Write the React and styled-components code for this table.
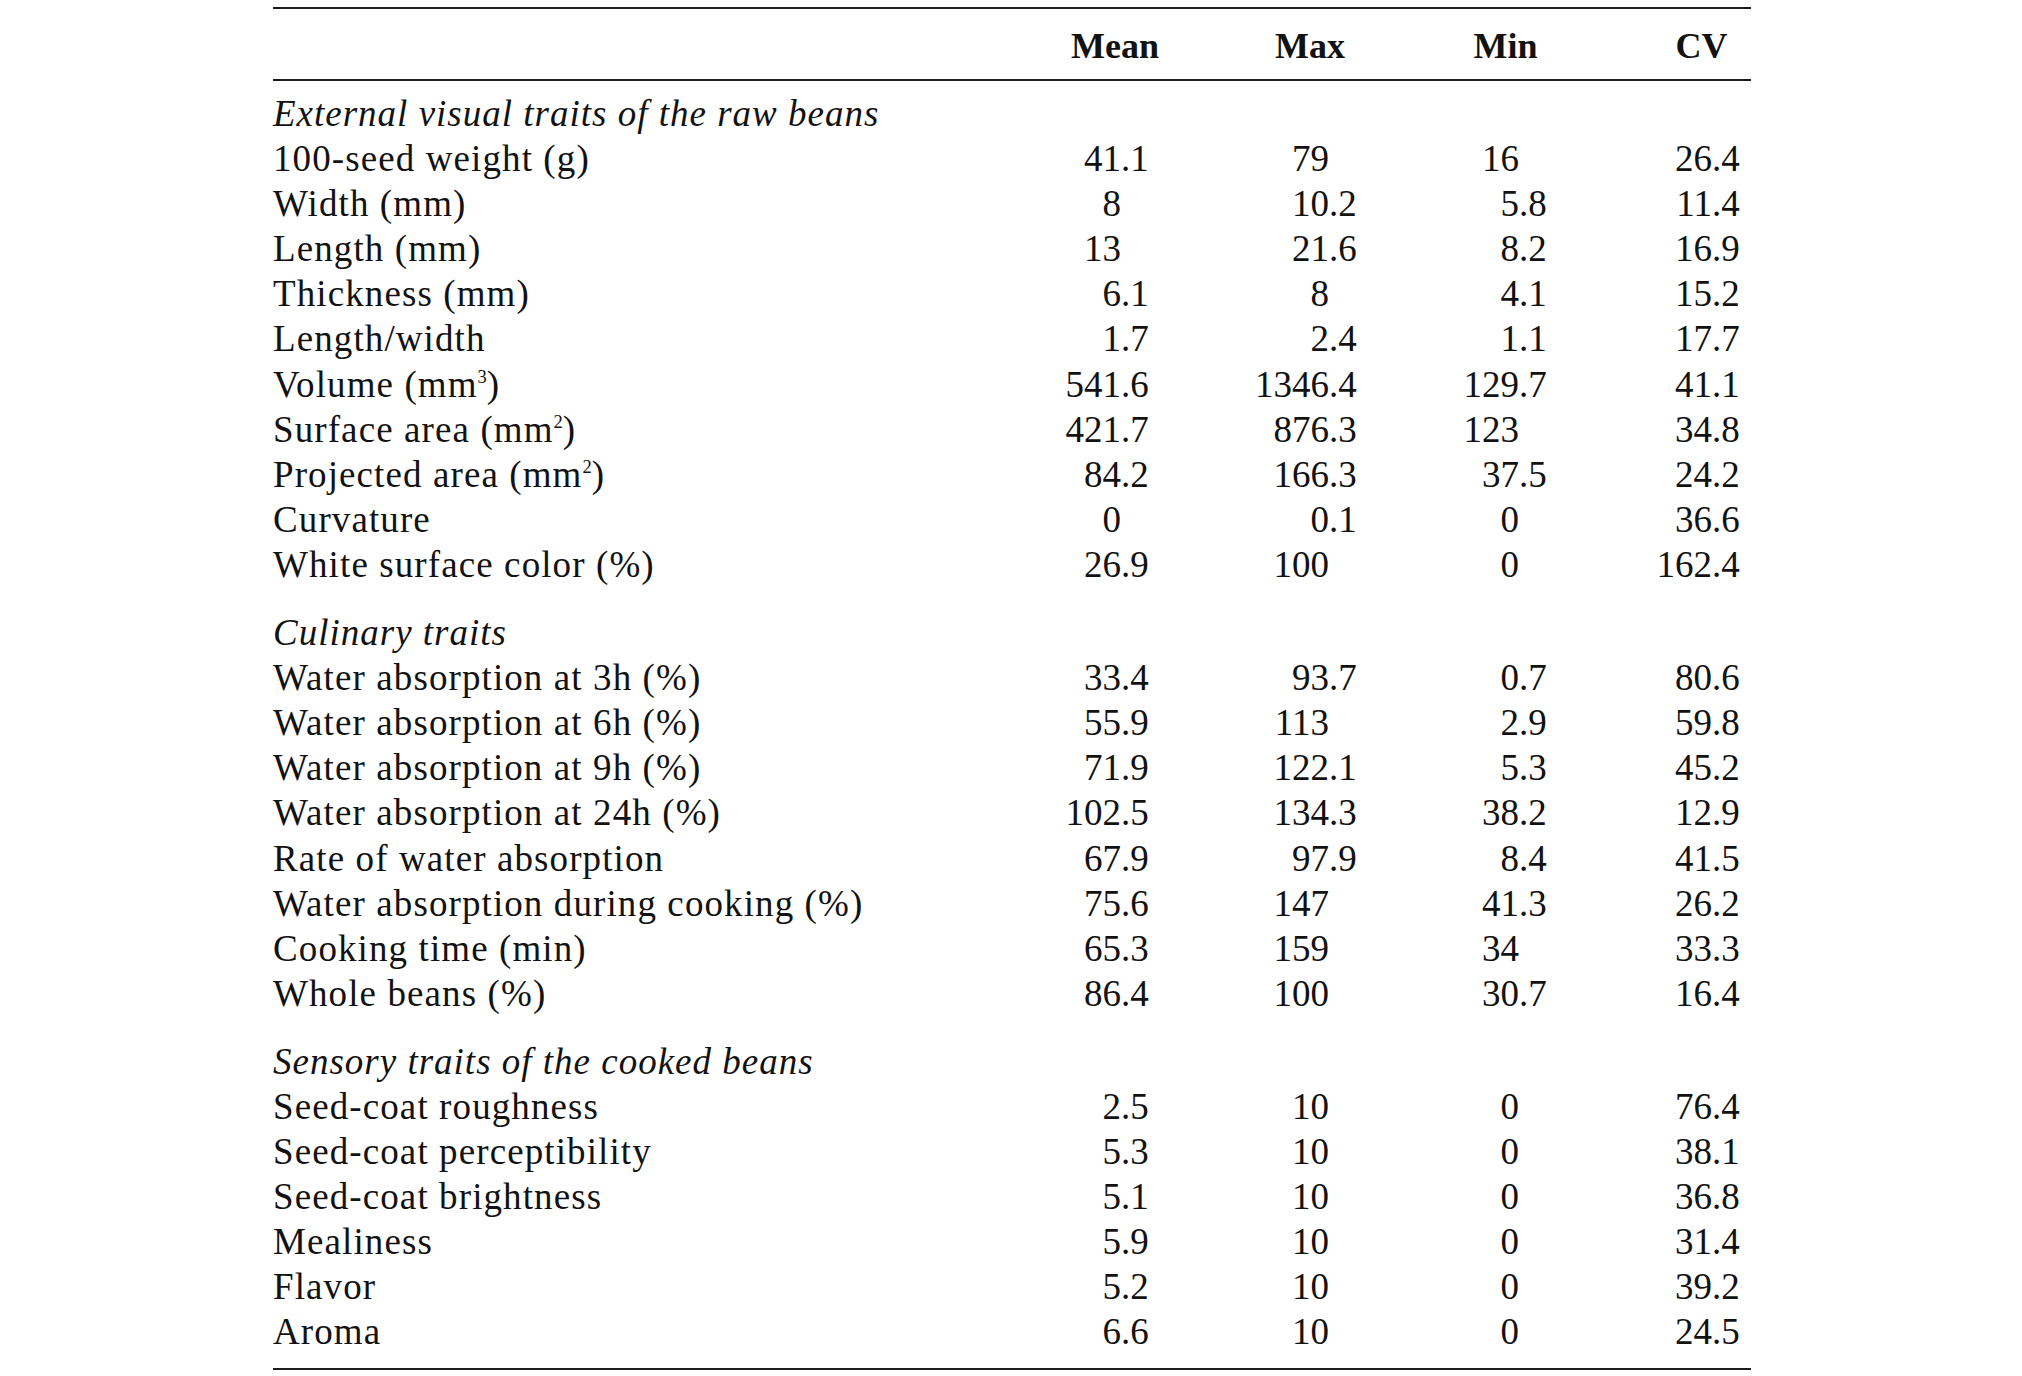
import styled, { createGlobalStyle } from "styled-components";

const GlobalStyle = createGlobalStyle`
  html, body {
    margin: 0;
    padding: 0;
    background: #ffffff;
  }
  body {
    font-family: "Liberation Serif", "Times New Roman", serif;
    color: #121212;
  }
`;

// label | int | frac | int | frac | int | frac | int | frac
const COLUMNS = "738px 110px 98px 110px 80px 110px 83px 110px 39px";

const Page = styled.div`
  padding: 7px 0 0 273px;
`;

const Table = styled.div`
  width: 1478px;
  border-top: 2px solid #1e1e1e;
  border-bottom: 2px solid #1e1e1e;
`;

const HeadRow = styled.div`
  display: grid;
  grid-template-columns: ${COLUMNS};
  padding: 15px 0 10px;
  border-bottom: 2px solid #1e1e1e;
  font-size: 36px;
  line-height: 45px;
  font-weight: 700;
`;

const HeadCell = styled.div`
  grid-column: span 2;
  text-align: center;
  padding-left: ${(p) => p.$padLeft || 0}px;
  padding-right: ${(p) => p.$padRight || 0}px;
`;

const Body = styled.div`
  padding: 10px 0 13px;
`;

const SectionTitle = styled.div`
  font-size: 37px;
  line-height: 45.1px;
  font-style: italic;
  letter-spacing: 1px;
  margin-top: ${(p) => (p.$first ? 0 : 23)}px;
`;

const Row = styled.div`
  display: grid;
  grid-template-columns: ${COLUMNS};
  font-size: 37px;
  line-height: 45.1px;
  white-space: nowrap;
`;

const Label = styled.div`
  text-align: left;
  letter-spacing: 1.1px;
`;

const Int = styled.div`
  text-align: right;
`;

const Frac = styled.div`
  text-align: left;
`;

const Sup = styled.sup`
  font-size: 0.5em;
  line-height: 0;
  vertical-align: 0.78em;
  letter-spacing: 0;
`;

const sections = [
  {
    title: "External visual traits of the raw beans",
    rows: [
      ["100-seed weight (g)", "41.1", "79", "16", "26.4"],
      ["Width (mm)", "8", "10.2", "5.8", "11.4"],
      ["Length (mm)", "13", "21.6", "8.2", "16.9"],
      ["Thickness (mm)", "6.1", "8", "4.1", "15.2"],
      ["Length/width", "1.7", "2.4", "1.1", "17.7"],
      [["Volume (mm", "3", ")"], "541.6", "1346.4", "129.7", "41.1"],
      [["Surface area (mm", "2", ")"], "421.7", "876.3", "123", "34.8"],
      [["Projected area (mm", "2", ")"], "84.2", "166.3", "37.5", "24.2"],
      ["Curvature", "0", "0.1", "0", "36.6"],
      ["White surface color (%)", "26.9", "100", "0", "162.4"],
    ],
  },
  {
    title: "Culinary traits",
    rows: [
      ["Water absorption at 3h (%)", "33.4", "93.7", "0.7", "80.6"],
      ["Water absorption at 6h (%)", "55.9", "113", "2.9", "59.8"],
      ["Water absorption at 9h (%)", "71.9", "122.1", "5.3", "45.2"],
      ["Water absorption at 24h (%)", "102.5", "134.3", "38.2", "12.9"],
      ["Rate of water absorption", "67.9", "97.9", "8.4", "41.5"],
      ["Water absorption during cooking (%)", "75.6", "147", "41.3", "26.2"],
      ["Cooking time (min)", "65.3", "159", "34", "33.3"],
      ["Whole beans (%)", "86.4", "100", "30.7", "16.4"],
    ],
  },
  {
    title: "Sensory traits of the cooked beans",
    rows: [
      ["Seed-coat roughness", "2.5", "10", "0", "76.4"],
      ["Seed-coat perceptibility", "5.3", "10", "0", "38.1"],
      ["Seed-coat brightness", "5.1", "10", "0", "36.8"],
      ["Mealiness", "5.9", "10", "0", "31.4"],
      ["Flavor", "5.2", "10", "0", "39.2"],
      ["Aroma", "6.6", "10", "0", "24.5"],
    ],
  },
];

// split "41.1" into "41" and ".1" so the columns line up on the point
const splitNum = (v) => {
  const i = v.indexOf(".");
  return i < 0 ? [v, ""] : [v.slice(0, i), v.slice(i)];
};

const renderLabel = (label) => {
  if (typeof label === "string") return label;
  const [before, sup, after] = label;
  return (
    <>
      {before}
      <Sup>{sup}</Sup>
      {after}
    </>
  );
};

const DataRow = ({ cells }) => {
  const [label, ...values] = cells;
  return (
    <Row>
      <Label>{renderLabel(label)}</Label>
      {values.map((v, i) => {
        const [a, b] = splitNum(v);
        return [<Int key={"i" + i}>{a}</Int>, <Frac key={"f" + i}>{b}</Frac>];
      })}
    </Row>
  );
};

const App = () => {
  return (
    <Page>
      <GlobalStyle />
      <Table>
        <HeadRow>
          <div />
          <HeadCell>Mean</HeadCell>
          <HeadCell $padRight={8}>Max</HeadCell>
          <HeadCell>Min</HeadCell>
          <HeadCell $padLeft={50}>CV</HeadCell>
        </HeadRow>
        <Body>
          {sections.map((s, si) => (
            <div key={s.title}>
              <SectionTitle $first={si === 0}>{s.title}</SectionTitle>
              {s.rows.map((r, ri) => (
                <DataRow key={ri} cells={r} />
              ))}
            </div>
          ))}
        </Body>
      </Table>
    </Page>
  );
};

export default App;
